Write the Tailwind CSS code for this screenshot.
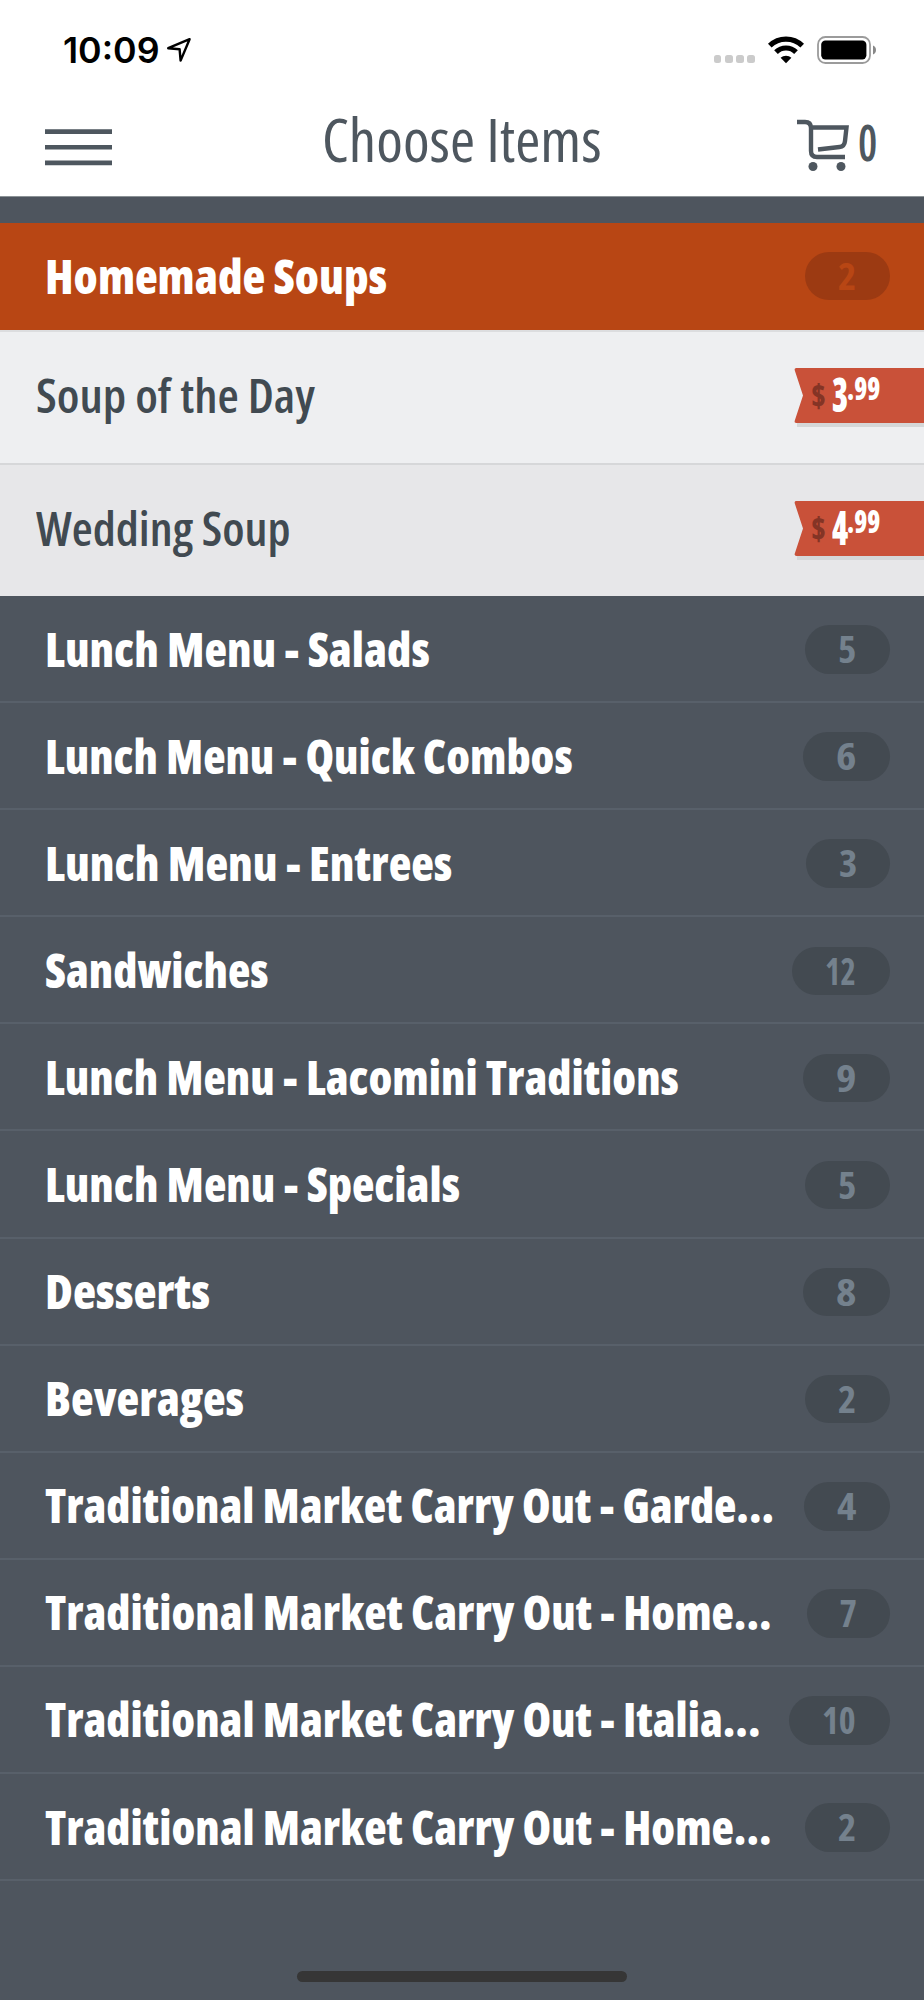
<!DOCTYPE html>
<html lang="en">
<head>
  <meta charset="utf-8">
  <title>Choose Items</title>
  <script src="https://cdn.jsdelivr.net/npm/@tailwindcss/browser@4"></script>
</head>
<body class="bg-[#4e555e] font-['Open_Sans',sans-serif]">
  <div class="w-[924px] h-[2000px] flex flex-col overflow-hidden">

    <header class="bg-white h-[197px] shrink-0 border-b border-[#8b9296]">
      <!-- Status bar -->
      <div class="h-[100px] flex items-center pl-[63px] pr-[47px]">
        <span class="w-[103px] shrink-0 whitespace-nowrap font-['Inter'] font-semibold text-[35px] leading-[40px] text-black"><span class="fit inline-block origin-left" data-w="97">10:09</span></span>
        <svg class="w-[26px] h-[26px] shrink-0" viewBox="0 0 26 26" fill="none" stroke="#000" stroke-width="2.4" stroke-linejoin="round"><path d="M23.6 2.2 2.2 11.2 13.6 12.2 14.6 23.6Z"/></svg>
        <div class="flex items-center ml-auto">
          <div class="flex gap-[3.5px] mt-[18px]">
            <i class="size-[7.7px] rounded-[2.5px] bg-[#cbcbcb]"></i>
            <i class="size-[7.7px] rounded-[2.5px] bg-[#cbcbcb]"></i>
            <i class="size-[7.7px] rounded-[2.5px] bg-[#cbcbcb]"></i>
            <i class="size-[7.7px] rounded-[2.5px] bg-[#cbcbcb]"></i>
          </div>
          <svg class="ml-[12px] w-[38px] h-[28px]" viewBox="0 0 38 28"><g fill="none" stroke="#000" stroke-width="5.2"><path d="M2.8 9.6A23.3 23.3 0 0 1 35.2 9.6"/><path d="M9 16.1A14.2 14.2 0 0 1 29 16.1"/></g><path d="M19 27.2 13.6 21.8A7.8 7.8 0 0 1 24.4 21.8Z"/></svg>
          <svg class="ml-[12px] w-[60px] h-[28px]" viewBox="0 0 60 28"><rect x="1" y="1" width="52" height="26" rx="7.5" fill="none" stroke="#9b9b9b" stroke-width="1.8"/><rect x="4.2" y="4.5" width="45.2" height="19" rx="4.2"/><path d="M56 9.5C60 11 60 17 56 18.5Z" fill="#888"/></svg>
        </div>
      </div>
      <!-- Title bar -->
      <div class="h-[96px] flex items-center pl-[45px] pr-[46px] text-[#4e575f]">
        <svg class="w-[67px] h-[38px] shrink-0 mt-[-2px]" viewBox="0 0 67 38" fill="#4e575f"><path d="M0 1.300H67V5.900H0ZM0 17H67V21.600H0ZM0 32.600H67V37.200H0Z"/></svg>
        <h1 class="w-[281px] ml-[209.5px] mt-[-19px] whitespace-nowrap text-[60px] leading-[60px] font-normal"><span class="fit inline-block origin-left [font-stretch:75%]" data-w="280">Choose Items</span></h1>
        <svg class="ml-auto w-[54px] h-[54px] mt-[-9px] shrink-0" viewBox="0 0 54 54"><path d="M1 5H9Q15 5 15 11V34Q15 40 21 40H49M15 10.5H50.5L49 24Q48.5 29.5 43.5 30L22 32.5" fill="none" stroke="#4e575f" stroke-width="4.4"/><circle cx="17" cy="49.5" r="4.5" fill="#4e575f"/><circle cx="45" cy="49.5" r="4.5" fill="#4e575f"/></svg>
        <span class="w-[20px] ml-[8px] mt-[-13px] text-[50px] leading-[50px] font-semibold"><span class="fit inline-block origin-left [font-stretch:75%]" data-w="19">0</span></span>
      </div>
    </header>

    <div class="h-[25.5px] shrink-0"></div>

    <!-- Open category -->
    <div class="h-[107.5px] shrink-0 bg-[#b84614] flex items-center pl-[45px] pr-[34px] pb-[1px]">
      <span class="flex-1 min-w-0 whitespace-nowrap text-white font-extrabold text-[47px] leading-[50px]"><span class="fit inline-block origin-left [font-stretch:75%]" data-w="342">Homemade Soups</span></span>
      <span class="w-[85px] h-[48.5px] rounded-full bg-[#9c3a12] text-[#b84614] font-bold text-[37px] leading-[47px] pl-[33px]"><span class="fit inline-block origin-left [font-stretch:75%]" data-w="18">2</span></span>
    </div>
    <div class="h-[135px] shrink-0 bg-[#eeeff1] border-y-2 border-t-[#dcdddf] border-b-[#d6d7d9] flex items-center pl-[36px]">
      <span class="flex-1 min-w-0 mt-[-5px] whitespace-nowrap text-[#414a51] font-semibold text-[47px] leading-[50px]"><span class="fit inline-block origin-left [font-stretch:75%]" data-w="279">Soup of the Day</span></span>
      <div class="price relative w-[130px] h-[61px]"></div>
    </div>
    <div class="h-[131px] shrink-0 bg-[#e7e7e9] flex items-center pl-[36px]">
      <span class="flex-1 min-w-0 mt-[-5px] whitespace-nowrap text-[#414a51] font-semibold text-[47px] leading-[50px]"><span class="fit inline-block origin-left [font-stretch:75%]" data-w="254">Wedding Soup</span></span>
      <div class="price relative w-[130px] h-[61px]"></div>
    </div>

    <div id="categories" class="shrink-0"></div>

    <div class="mx-auto mt-auto mb-[18px] w-[330px] h-[11px] rounded-full bg-[#363636]"></div>
  </div>

  <script>
    // name, label width, item count, pill width, digits width
    const categories = [
      ['Lunch Menu - Salads', 385, 5, 85, 18],
      ['Lunch Menu - Quick Combos', 528, 6, 87.5, 20],
      ['Lunch Menu - Entrees', 407, 3, 84.5, 18],
      ['Sandwiches', 224, 12, 98, 31],
      ['Lunch Menu - Lacomini Traditions', 634, 9, 87.5, 20],
      ['Lunch Menu - Specials', 415, 5, 85, 18],
      ['Desserts', 165, 8, 87.5, 20],
      ['Beverages', 199, 2, 85, 18],
      ['Traditional Market Carry Out - Garde...', 729, 4, 86.5, 19],
      ['Traditional Market Carry Out - Home...', 727, 7, 83.5, 17],
      ['Traditional Market Carry Out - Italia...', 716, 10, 101.5, 34],
      ['Traditional Market Carry Out - Home...', 727, 2, 85, 18],
    ];

    document.getElementById('categories').innerHTML = categories.map(([name, w, count, pill, digits]) => `
      <div class="h-[107.1px] border-b-2 border-[#58606a] flex items-center pl-[45px] pr-[34px]">
        <span class="flex-1 min-w-0 whitespace-nowrap text-white font-extrabold text-[47px] leading-[50px]"><span class="fit inline-block origin-left [font-stretch:75%]" data-w="${w}">${name}</span></span>
        <span class="h-[48.5px] mt-[2px] shrink-0 rounded-full bg-[#434a51] text-[#74818d] font-bold text-[37px] leading-[47px] pl-[33px] whitespace-nowrap" style="width:${pill}px"><span class="fit inline-block origin-left [font-stretch:75%]" data-w="${digits}">${count}</span></span>
      </div>`).join('');

    const prices = ['3', '4'];
    document.querySelectorAll('.price').forEach((el, i) => {
      el.innerHTML = `
        <svg class="absolute inset-0" width="130" height="61" viewBox="0 0 130 61">
          <path d="M3 50H130V60H3Z" fill="#d5d7d8"/>
          <path d="M2.5 1H130V56H2.5Q0 56 .8 53.5L9 28.5 .8 3.5Q0 1 2.5 1Z" fill="#c95139"/>
        </svg>
        <div class="relative flex whitespace-nowrap font-extrabold text-white">
          <span class="w-[21px] ml-[17px] mt-[12px] text-[32px] leading-[32px] text-[#843425]"><span class="fit inline-block origin-left [font-stretch:75%]" data-w="15">$</span></span>
          <span class="w-[15px] mt-[3px] text-[47px] leading-[48px]"><span class="fit inline-block origin-left [font-stretch:75%]" data-w="16">${prices[i]}</span></span>
          <span class="mt-[4px] text-[31px] leading-[34px]"><span class="fit inline-block origin-left [font-stretch:75%]" data-w="33">.99</span></span>
        </div>`;
    });

    const fit = el => {
      if (el.offsetWidth) el.style.transform = `scaleX(${el.dataset.w / el.offsetWidth})`;
    };
    const observer = new ResizeObserver(entries => entries.forEach(e => fit(e.target)));
    document.querySelectorAll('.fit').forEach(el => observer.observe(el));
    window.addEventListener('load', () => document.querySelectorAll('.fit').forEach(fit));
  </script>
</body>
</html>
